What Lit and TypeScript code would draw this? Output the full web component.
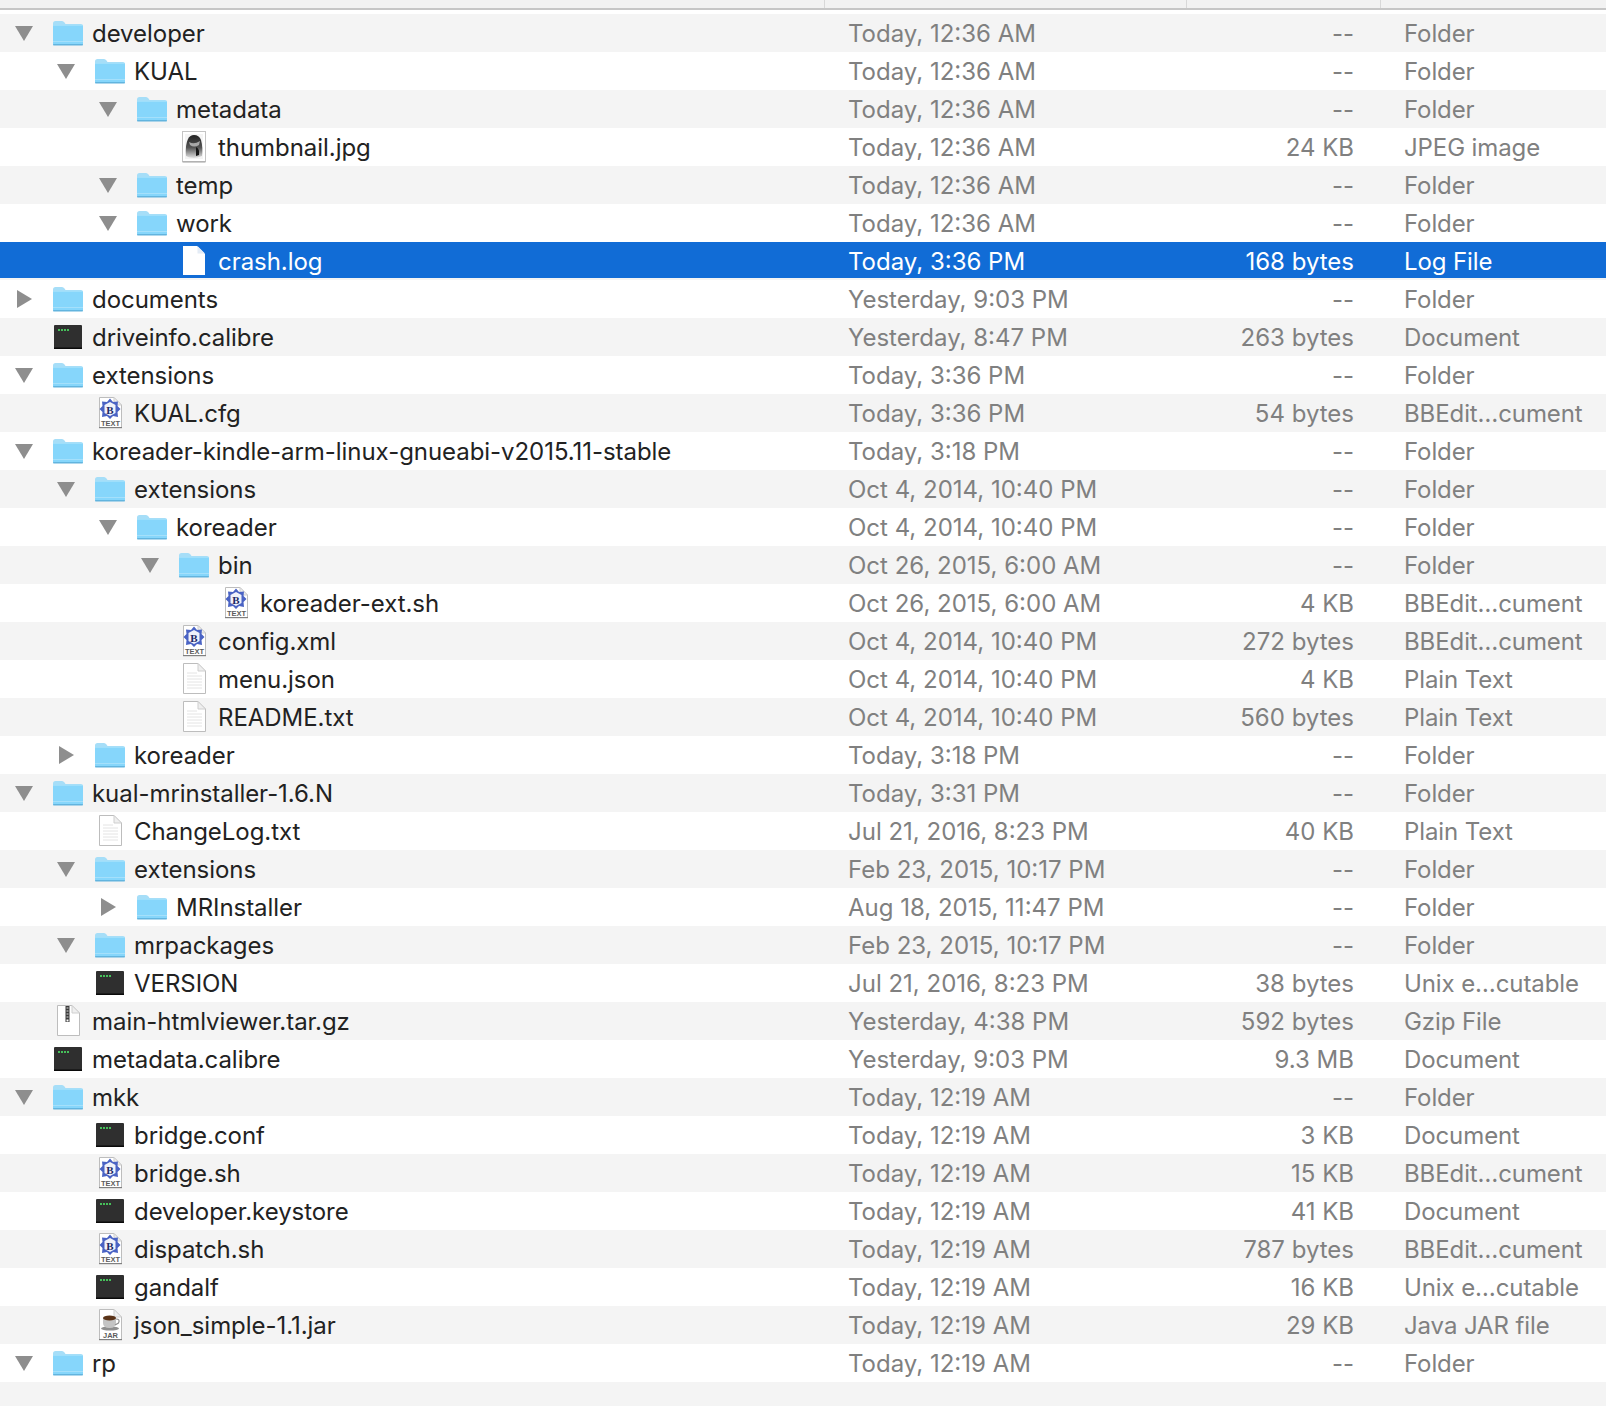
import { LitElement, html, css, svg } from "lit";
import { customElement } from "lit/decorators.js";

type Icon = "folder" | "jpg" | "plain" | "exec" | "bb" | "zip" | "jar" | "sel";
type Row = [number, "o" | "c" | "", Icon, string, string, string, string];

const F = "Folder";
const BB = "BBEdit\u2026cument";
const UX = "Unix e\u2026cutable";
const T1 = "Today, 12:36 AM";
const O4 = "Oct 4, 2014, 10:40 PM";
const O26 = "Oct 26, 2015, 6:00 AM";
const F23 = "Feb 23, 2015, 10:17 PM";
const T2 = "Today, 12:19 AM";

const ROWS: Row[] = [
  [0, "o", "folder", "developer", T1, "--", F],
  [1, "o", "folder", "KUAL", T1, "--", F],
  [2, "o", "folder", "metadata", T1, "--", F],
  [3, "", "jpg", "thumbnail.jpg", T1, "24 KB", "JPEG image"],
  [2, "o", "folder", "temp", T1, "--", F],
  [2, "o", "folder", "work", T1, "--", F],
  [3, "", "sel", "crash.log", "Today, 3:36 PM", "168 bytes", "Log File"],
  [0, "c", "folder", "documents", "Yesterday, 9:03 PM", "--", F],
  [0, "", "exec", "driveinfo.calibre", "Yesterday, 8:47 PM", "263 bytes", "Document"],
  [0, "o", "folder", "extensions", "Today, 3:36 PM", "--", F],
  [1, "", "bb", "KUAL.cfg", "Today, 3:36 PM", "54 bytes", BB],
  [0, "o", "folder", "koreader-kindle-arm-linux-gnueabi-v2015.11-stable", "Today, 3:18 PM", "--", F],
  [1, "o", "folder", "extensions", O4, "--", F],
  [2, "o", "folder", "koreader", O4, "--", F],
  [3, "o", "folder", "bin", O26, "--", F],
  [4, "", "bb", "koreader-ext.sh", O26, "4 KB", BB],
  [3, "", "bb", "config.xml", O4, "272 bytes", BB],
  [3, "", "plain", "menu.json", O4, "4 KB", "Plain Text"],
  [3, "", "plain", "README.txt", O4, "560 bytes", "Plain Text"],
  [1, "c", "folder", "koreader", "Today, 3:18 PM", "--", F],
  [0, "o", "folder", "kual-mrinstaller-1.6.N", "Today, 3:31 PM", "--", F],
  [1, "", "plain", "ChangeLog.txt", "Jul 21, 2016, 8:23 PM", "40 KB", "Plain Text"],
  [1, "o", "folder", "extensions", F23, "--", F],
  [2, "c", "folder", "MRInstaller", "Aug 18, 2015, 11:47 PM", "--", F],
  [1, "o", "folder", "mrpackages", F23, "--", F],
  [1, "", "exec", "VERSION", "Jul 21, 2016, 8:23 PM", "38 bytes", UX],
  [0, "", "zip", "main-htmlviewer.tar.gz", "Yesterday, 4:38 PM", "592 bytes", "Gzip File"],
  [0, "", "exec", "metadata.calibre", "Yesterday, 9:03 PM", "9.3 MB", "Document"],
  [0, "o", "folder", "mkk", T2, "--", F],
  [1, "", "exec", "bridge.conf", T2, "3 KB", "Document"],
  [1, "", "bb", "bridge.sh", T2, "15 KB", BB],
  [1, "", "exec", "developer.keystore", T2, "41 KB", "Document"],
  [1, "", "bb", "dispatch.sh", T2, "787 bytes", BB],
  [1, "", "exec", "gandalf", T2, "16 KB", UX],
  [1, "", "jar", "json_simple-1.1.jar", T2, "29 KB", "Java JAR file"],
  [0, "o", "folder", "rp", T2, "--", F],
];

const page = (body: unknown) => svg`
  <path d="M1.5 .5H16L23.5 8V30.5H1.5Z" fill="#fff" stroke="#bdbdbd"/>
  <path d="M16 .5V8H23.5Z" fill="#efefef" stroke="#cfcfcf"/>
  ${body}`;

const ICONS: Record<Icon, () => unknown> = {
  folder: () => html`<svg class="ic" width="32" height="26" viewBox="0 0 32 26">
    <path d="M1 3.500Q1 1 3.500 1H10Q11.500 1 12.500 2.500L13.500 4H29Q31 4 31 6V23Q31 25 29 25H3Q1 25 1 23Z" fill="#a6def8"/>
    <rect x="1" y="5" width="30" height="20" rx="1.500" fill="#86d6fb"/>
    <rect x="1" y="5" width="30" height="1" fill="#9fdffb"/>
    <rect x="1" y="21" width="30" height="1" fill="#a5e0fb"/>
    <rect x="1" y="24" width="30" height="1.500" rx=".7" fill="#62b4de"/>
  </svg>`,
  jpg: () => html`<svg class="ic" width="24" height="32" viewBox="0 0 24 32">
    <defs><linearGradient id="jg" x1="0" y1="0" x2="0" y2="1">
      <stop offset="0" stop-color="#222"/><stop offset=".55" stop-color="#555"/><stop offset="1" stop-color="#e0e0e0"/>
    </linearGradient></defs>
    <rect x=".5" y=".5" width="23" height="30" fill="#fff" stroke="#c4c4c4"/>
    <rect x="3" y="3" width="18" height="25" fill="#f4f4f4"/>
    <path d="M4 25Q3 14 6 8Q8 4 12 4Q17 4 19 9Q21 16 20 25Q15 27 12 27Q7 27 4 25Z" fill="url(#jg)"/>
    <path d="M7 11Q12 14 18 10L17 14Q12 17 8 14Z" fill="#a8a8a8"/>
    <path d="M14 16Q18 18 17 24L14 25Z" fill="#161616"/>
    <rect x=".5" y="30.500" width="23" height="1" fill="#a0a0a0"/>
  </svg>`,
  plain: () => html`<svg class="ic" width="25" height="32" viewBox="0 0 25 32">
    ${page(svg`<g stroke="#e4e4e4"><path d="M5 10H15M5 13H20M5 16H20M5 19H20M5 22H20M5 25H20"/></g>`)}
  </svg>`,
  sel: () => html`<svg class="ic" width="24" height="30" viewBox="0 0 24 30">
    <path d="M1 0H15L23 8V29H1Z" fill="#fff"/>
    <path d="M15.500 0V7.500H23" fill="#e4ecf6"/>
  </svg>`,
  exec: () => html`<svg class="ic" width="28" height="24" viewBox="0 0 28 24">
    <rect x="0" y="0" width="28" height="24" rx="1" fill="#2f2f2f"/>
    <rect x="0" y="22.500" width="28" height="1.500" fill="#0a0a0a"/>
    <path d="M4 5h2M7 5h2M10 5h2M13 5h2" stroke="#46c05a" stroke-width="2"/>
  </svg>`,
  bb: () => html`<svg class="ic" width="25" height="32" viewBox="0 0 25 32">
    ${page(svg`
      <path d="M12 1.500L15 5L20 4.500L19.500 9L22.500 12L19.500 15L20 20L15 19L12 22L9 19L4 20L4.500 15L1.500 12L4.500 9L4 4.500L9 5Z" fill="#4a63c4"/>
      <path d="M12 5L17.500 8V16L12 19L6.500 16V8Z" fill="#f0f2fa"/>
      <text x="12" y="16.500" text-anchor="middle" class="bbb">B</text>
      <text x="12.500" y="28.500" text-anchor="middle" class="lbl">TEXT</text>
      <rect x="1" y="30" width="23" height="1.200" fill="#808080"/>`)}
  </svg>`,
  zip: () => html`<svg class="ic" width="25" height="32" viewBox="0 0 25 32">
    ${page(svg`
      <rect x="9.500" y="1" width="4" height="16" fill="#3a3a3a"/>
      <path d="M10.500 3H12.500M10.500 6H12.500M10.500 9H12.500M10.500 12H12.500" stroke="#ddd"/>
      <rect x="10.500" y="14.500" width="2" height="2" fill="#fff"/>`)}
  </svg>`,
  jar: () => html`<svg class="ic" width="25" height="32" viewBox="0 0 25 32">
    ${page(svg`
      <ellipse cx="12" cy="19.500" rx="9" ry="2" fill="#8f8f8f"/>
      <path d="M5 9H18V14Q18 19 11.500 19Q5 19 5 14Z" fill="#c4c4c4"/>
      <ellipse cx="11.500" cy="9" rx="6.500" ry="2.600" fill="#5a3318"/>
      <path d="M18 10Q22.500 10 20.500 14L17 16" fill="none" stroke="#8f8f8f" stroke-width="1.200"/>
      <text x="12.500" y="28.500" text-anchor="middle" class="lbl">JAR</text>
      <rect x="1" y="30" width="23" height="1.200" fill="#808080"/>`)}
  </svg>`,
};

@customElement("app-root")
export class AppRoot extends LitElement {
  static styles = css`
    :host {
      display: block;
      width: 1606px;
      height: 1406px;
      overflow: hidden;
      background: #f4f4f4;
      font-family: Inter, "Liberation Sans", sans-serif;
      font-size: 24px;
      color: #222;
    }
    .head {
      display: grid;
      grid-template-columns: 825px 362px 194px 1fr;
      height: 8px;
      background: #f2f2f2;
      border-bottom: 2px solid #c6c6c6;
    }
    .head div {
      border-right: 1px solid #d8d8d8;
    }
    .head div:last-child {
      border-right: none;
    }
    .gap {
      height: 4px;
      background: #fff;
    }
    .row {
      display: grid;
      grid-template-columns: 848px 340px 166px 50px 1fr;
      align-items: center;
      height: 38px;
      background: #fff;
      white-space: nowrap;
    }
    .row.odd {
      background: #f4f4f4;
    }
    .row.sel {
      height: 36px;
      box-sizing: border-box;
      padding-top: 2px;
      margin-bottom: 2px;
      background: #116cd6;
      color: #fff;
    }
    .name {
      display: flex;
      align-items: center;
      height: 100%;
      letter-spacing: -0.05px;
    }
    .tw {
      flex: none;
      width: 52px;
      display: flex;
      padding-left: 15px;
      box-sizing: border-box;
    }
    .tw.c {
      padding-left: 17px;
    }
    .slot {
      flex: none;
      width: 32px;
      margin-right: 8px;
      display: flex;
      justify-content: center;
    }
    .ic {
      display: block;
    }
    .muted {
      color: #808080;
    }
    .sel .muted {
      color: #fff;
    }
    .size {
      text-align: right;
    }
    .kind {
      letter-spacing: -0.1px;
    }
    .bbb {
      font: bold 11px "Liberation Serif", serif;
      letter-spacing: 0;
      fill: #1c2a66;
    }
    .lbl {
      font: bold 7.5px "Liberation Sans", sans-serif;
      letter-spacing: 0;
      fill: #5c5c5c;
    }
  `;

  private twisty(kind: string) {
    if (kind === "o")
      return html`<svg width="18" height="15" viewBox="0 0 18 15"><path d="M0 0H18L9 15Z" fill="#8e8e8e"/></svg>`;
    if (kind === "c")
      return html`<svg width="15" height="18" viewBox="0 0 15 18"><path d="M0 0L15 9L0 18Z" fill="#8e8e8e"/></svg>`;
    return "";
  }

  render() {
    return html`
      <div class="head"><div></div><div></div><div></div><div></div></div>
      <div class="gap"></div>
      ${ROWS.map(([depth, tw, icon, name, date, size, kind], i) => html`
        <div class="row ${i % 2 === 0 ? "odd" : ""} ${icon === "sel" ? "sel" : ""}">
          <div class="name" style="padding-left:${depth * 42}px">
            <span class="tw ${tw}">${this.twisty(tw)}</span>
            <span class="slot">${ICONS[icon]()}</span>
            <span>${name}</span>
          </div>
          <span class="muted">${date}</span>
          <span class="muted size">${size}</span>
          <span></span>
          <span class="muted kind">${kind}</span>
        </div>`)}
    `;
  }
}
